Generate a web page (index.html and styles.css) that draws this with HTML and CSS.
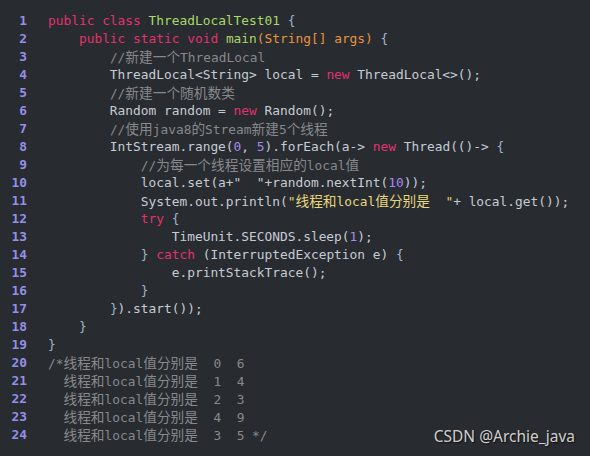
FILE: index.html
```html
<!DOCTYPE html>
<html lang="zh">
<head>
<meta charset="utf-8">
<title>ThreadLocalTest01</title>
<link rel="stylesheet" href="styles.css">
</head>
<body>
<div class="editor">
  <div class="code">
    <div class="ln"><span class="no">1</span><span class="src"><span class="kw">public</span> <span class="kw">class</span> <span class="cls">ThreadLocalTest01</span> <span class="br">{</span></span></div>
    <div class="ln"><span class="no">2</span><span class="src">    <span class="kw">public</span> <span class="kw">static</span> <span class="kw">void</span> <span class="cls">main</span><span class="par">(String[] args)</span> <span class="br">{</span></span></div>
    <div class="ln"><span class="no">3</span><span class="src">        <span class="cm">//<span class="zh">新建一个</span>ThreadLocal</span></span></div>
    <div class="ln"><span class="no">4</span><span class="src">        ThreadLocal&lt;String&gt; local = <span class="kw">new</span> ThreadLocal&lt;&gt;();</span></div>
    <div class="ln"><span class="no">5</span><span class="src">        <span class="cm">//<span class="zh">新建一个随机数类</span></span></span></div>
    <div class="ln"><span class="no">6</span><span class="src">        Random random = <span class="kw">new</span> Random();</span></div>
    <div class="ln"><span class="no">7</span><span class="src">        <span class="cm">//<span class="zh">使用</span>java8<span class="zh">的</span>Stream<span class="zh">新建</span>5<span class="zh">个线程</span></span></span></div>
    <div class="ln"><span class="no">8</span><span class="src">        IntStream.range(<span class="num">0</span>, <span class="num">5</span>).forEach(a-&gt; <span class="kw">new</span> Thread(()-&gt; <span class="br">{</span></span></div>
    <div class="ln"><span class="no">9</span><span class="src">            <span class="cm">//<span class="zh">为每一个线程设置相应的</span>local<span class="zh">值</span></span></span></div>
    <div class="ln"><span class="no">10</span><span class="src">            local.set(a+"  "+random.nextInt(<span class="num">10</span>));</span></div>
    <div class="ln"><span class="no">11</span><span class="src">            System.out.println(<span class="str">"<span class="zh">线程和</span>local<span class="zh">值分别是</span>  "</span>+ local.get());</span></div>
    <div class="ln"><span class="no">12</span><span class="src">            <span class="kw">try</span> <span class="br">{</span></span></div>
    <div class="ln"><span class="no">13</span><span class="src">                TimeUnit.SECONDS.sleep(<span class="num">1</span>);</span></div>
    <div class="ln"><span class="no">14</span><span class="src">            <span class="br">}</span> <span class="kw">catch</span> (InterruptedException e) <span class="br">{</span></span></div>
    <div class="ln"><span class="no">15</span><span class="src">                e.printStackTrace();</span></div>
    <div class="ln"><span class="no">16</span><span class="src">            <span class="br">}</span></span></div>
    <div class="ln"><span class="no">17</span><span class="src">        <span class="br">}</span>).start());</span></div>
    <div class="ln"><span class="no">18</span><span class="src">    <span class="br">}</span></span></div>
    <div class="ln"><span class="no">19</span><span class="src"><span class="br">}</span></span></div>
    <div class="ln"><span class="no">20</span><span class="src"><span class="cm">/*<span class="zh">线程和</span>local<span class="zh">值分别是</span>  0  6</span></span></div>
    <div class="ln"><span class="no">21</span><span class="src"><span class="cm">  <span class="zh">线程和</span>local<span class="zh">值分别是</span>  1  4</span></span></div>
    <div class="ln"><span class="no">22</span><span class="src"><span class="cm">  <span class="zh">线程和</span>local<span class="zh">值分别是</span>  2  3</span></span></div>
    <div class="ln"><span class="no">23</span><span class="src"><span class="cm">  <span class="zh">线程和</span>local<span class="zh">值分别是</span>  4  9</span></span></div>
    <div class="ln"><span class="no">24</span><span class="src"><span class="cm">  <span class="zh">线程和</span>local<span class="zh">值分别是</span>  3  5 */</span></span></div>
  </div>
  <div class="watermark">CSDN @Archie_java</div>
</div>
</body>
</html>
```

FILE: styles.css
```css
html, body {
  margin: 0;
  padding: 0;
  background: #282b2f;
}

.editor {
  position: relative;
  width: 590px;
  height: 456px;
  background: #282b2f;
  overflow: hidden;
}

.code {
  padding-top: 12px;
  font-family: "DejaVu Sans Mono", "Noto Sans CJK SC", monospace;
  font-size: 12.85px;
  color: #c5ccd6;
}

.ln {
  display: flex;
  height: 18px;
  line-height: 18px;
  white-space: pre;
}

.no {
  width: 27px;
  margin-right: 21px;
  text-align: right;
  font-weight: bold;
  color: #948fe8;
  flex: none;
}

.src {
  white-space: pre;
}

.zh {
  font-family: "DejaVu Sans Mono", "Noto Sans CJK SC", sans-serif;
  font-size: 13.7px;
  line-height: 18px;
}

.kw { color: #e0336e; }
.cls { color: #a8d868; }
.par { color: #e8943f; }
.cm { color: #86898d; }
.num { color: #a689f0; }
.str { color: #e6d67c; }
.br { color: #9fb4cc; }

.watermark {
  position: absolute;
  right: 15px;
  bottom: 9px;
  font-family: "Noto Sans", sans-serif;
  font-size: 15.5px;
  color: #cfcfcf;
  text-shadow: 1px 1px 1px #111;
}
```
